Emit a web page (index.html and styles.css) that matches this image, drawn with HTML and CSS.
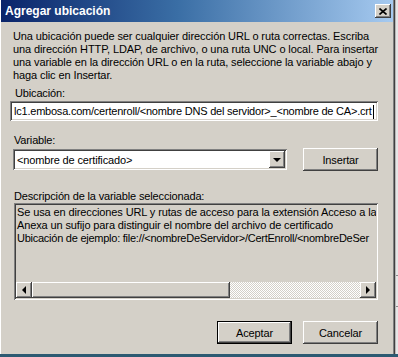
FILE: index.html
```html
<!DOCTYPE html>
<html lang="es">
<head>
    <meta charset="UTF-8">
    <title>Agregar ubicación</title>
    <link rel="stylesheet" href="styles.css">
</head>
<body>
    <div class="screen">
        <div class="dialog">
            <div class="titlebar">
                <span class="title">Agregar ubicación</span>
                <span class="close">
                    <svg width="8" height="7" viewBox="0 0 8 7">
                        <path d="M0.5 0.5 L7.5 6.5 M7.5 0.5 L0.5 6.5" stroke="#000" stroke-width="1.6" fill="none"/>
                    </svg>
                </span>
            </div>

            <div class="content">
                <p class="intro">Una ubicación puede ser cualquier dirección URL o ruta correctas. Escriba<br>una dirección HTTP, LDAP, de archivo, o una ruta UNC o local. Para insertar<br>una variable en la dirección URL o en la ruta, seleccione la variable abajo y<br>haga clic en Insertar.</p>

                <div class="label label-loc">Ubicación:</div>
                <div class="field">lc1.embosa.com/certenroll/&lt;nombre DNS del servidor&gt;_&lt;nombre de CA&gt;.crt<span class="caret"></span></div>

                <div class="label label-var">Variable:</div>
                <div class="var-row">
                    <div class="combo">
                        <span class="combo-text">&lt;nombre de certificado&gt;</span>
                        <span class="drop"><span class="tri-down"></span></span>
                    </div>
                    <button class="btn btn-insert">Insertar</button>
                </div>

                <div class="label label-desc">Descripción de la variable seleccionada:</div>
                <div class="desc">
                    <div class="desc-text">
                        <div>Se usa en direcciones URL y rutas de acceso para la extensión Acceso a la</div>
                        <div>Anexa un sufijo para distinguir el nombre del archivo de certificado</div>
                        <div class="tight">Ubicación de ejemplo: file://&lt;nombreDeServidor&gt;/CertEnroll/&lt;nombreDeSer</div>
                    </div>
                    <div class="hscroll">
                        <span class="arrow"><span class="tri-left"></span></span>
                        <span class="thumb"></span>
                        <span class="track"></span>
                        <span class="arrow"><span class="tri-right"></span></span>
                    </div>
                </div>

                <div class="actions">
                    <button class="btn btn-default">Aceptar</button>
                    <button class="btn">Cancelar</button>
                </div>
            </div>
        </div>
        <div class="behind"></div>
    </div>
    <div class="taskbar"></div>
</body>
</html>
```

FILE: styles.css
```css
body {
    margin: 0;
    width: 398px;
    height: 357px;
    overflow: hidden;
    background: #d4d0c8;
    font-family: "Liberation Sans", Arial, sans-serif;
    font-size: 11px;
    letter-spacing: -0.15px;
    color: #000;
}
.screen {
    display: flex;
    height: 354px;
}
.dialog {
    width: 395px;
    flex: none;
    background: #d4d0c8;
    box-shadow: inset -1px 0 #404040, inset 1px 0 #fff, inset -2px 0 #808080;
    padding: 0 2px 0 1px;
    box-sizing: border-box;
}
.behind {
    flex: 1;
    border-left: 1px solid #b8b8b8;
    background: linear-gradient(#e6e6e6 0 275px, #8a8a8a 275px 276px, #e6e6e6 276px 306px, #8a8a8a 306px 307px, #e6e6e6 307px);
}
.taskbar {
    height: 3px;
    background: #2c5a72;
    border-top: 1px solid #5f8aa0;
    margin-top: -1px;
}
.titlebar {
    height: 22px;
    display: flex;
    align-items: center;
    justify-content: space-between;
    padding: 0 2px 0 4px;
    background: linear-gradient(to right, #0a246a, #3a6ea5 45%, #a6caf0);
}
.title {
    color: #fff;
    font-weight: bold;
    font-size: 12px;
    letter-spacing: 0;
}
.close {
    width: 16px;
    height: 14px;
    display: flex;
    align-items: center;
    justify-content: center;
    background: #d4d0c8;
    box-shadow: inset -1px -1px #404040, inset 1px 1px #fff, inset -2px -2px #808080;
}
.content {
    padding: 0 15px 0 9px;
}
.intro {
    margin: 8px 0 0 3px;
    line-height: 13px;
    white-space: nowrap;
    letter-spacing: -0.1px;
}
.label {
    line-height: 13px;
}
.label-loc {
    margin: 5px 0 0 5px;
}
.field {
    margin-top: 1px;
    height: 20px;
    line-height: 20px;
    padding-left: 4px;
    background: #fff;
    white-space: nowrap;
    overflow: hidden;
    letter-spacing: -0.22px;
    box-shadow: inset 1px 1px #808080, inset -1px -1px #fff, inset 2px 2px #404040, inset -2px -2px #d4d0c8;
}
.caret {
    display: inline-block;
    width: 1px;
    height: 14px;
    margin-left: 1px;
    background: #000;
    vertical-align: middle;
}
.label-var {
    margin: 13px 0 0 4px;
}
.var-row {
    display: flex;
    justify-content: space-between;
    align-items: flex-start;
    margin: 1px 0 0 3px;
}
.combo {
    width: 274px;
    height: 21px;
    display: flex;
    align-items: center;
    justify-content: space-between;
    background: #fff;
    padding: 2px;
    box-sizing: border-box;
    margin-top: 1px;
    box-shadow: inset 1px 1px #808080, inset -1px -1px #fff, inset 2px 2px #404040, inset -2px -2px #d4d0c8;
}
.combo-text {
    padding-left: 2px;
}
.drop {
    width: 16px;
    height: 17px;
    display: flex;
    align-items: center;
    justify-content: center;
    background: #d4d0c8;
    box-shadow: inset -1px -1px #404040, inset 1px 1px #fff, inset -2px -2px #808080;
}
.tri-down {
    border-left: 4px solid transparent;
    border-right: 4px solid transparent;
    border-top: 4px solid #000;
}
.btn {
    font-family: "Liberation Sans", Arial, sans-serif;
    font-size: 11px;
    letter-spacing: -0.15px;
    color: #000;
    background: #d4d0c8;
    border: none;
    width: 75px;
    height: 23px;
    padding: 0;
    box-shadow: inset -1px -1px #404040, inset 1px 1px #fff, inset -2px -2px #808080;
}
.label-desc {
    margin: 19px 0 0 4px;
}
.desc {
    margin: 0 0 0 4px;
    height: 97px;
    padding: 3px 2px 2px 2px;
    box-sizing: border-box;
    display: flex;
    flex-direction: column;
    justify-content: space-between;
    box-shadow: inset 1px 1px #808080, inset -1px -1px #fff, inset 2px 2px #404040, inset -2px -2px #d4d0c8;
}
.desc-text {
    line-height: 13px;
    white-space: nowrap;
    overflow: hidden;
    padding-left: 1px;
    letter-spacing: -0.12px;
}
.desc-text .tight {
    letter-spacing: -0.25px;
}
.hscroll {
    display: flex;
    height: 16px;
}
.arrow {
    width: 16px;
    height: 16px;
    display: flex;
    align-items: center;
    justify-content: center;
    background: #d4d0c8;
    box-shadow: inset -1px -1px #404040, inset 1px 1px #fff, inset -2px -2px #808080;
}
.tri-left {
    border-top: 4px solid transparent;
    border-bottom: 4px solid transparent;
    border-right: 4px solid #000;
}
.tri-right {
    border-top: 4px solid transparent;
    border-bottom: 4px solid transparent;
    border-left: 4px solid #000;
}
.thumb {
    width: 198px;
    background: #d4d0c8;
    box-shadow: inset -1px -1px #404040, inset 1px 1px #fff, inset -2px -2px #808080;
}
.track {
    flex: 1;
    background: repeating-conic-gradient(#fff 0 25%, #d4d0c8 0 50%) 0 0 / 2px 2px;
}
.actions {
    display: flex;
    justify-content: flex-end;
    gap: 11px;
    margin-top: 21px;
}
.btn-default {
    box-shadow: inset 0 0 0 1px #000, inset -2px -2px #404040, inset 2px 2px #fff, inset -3px -3px #808080;
}
```
